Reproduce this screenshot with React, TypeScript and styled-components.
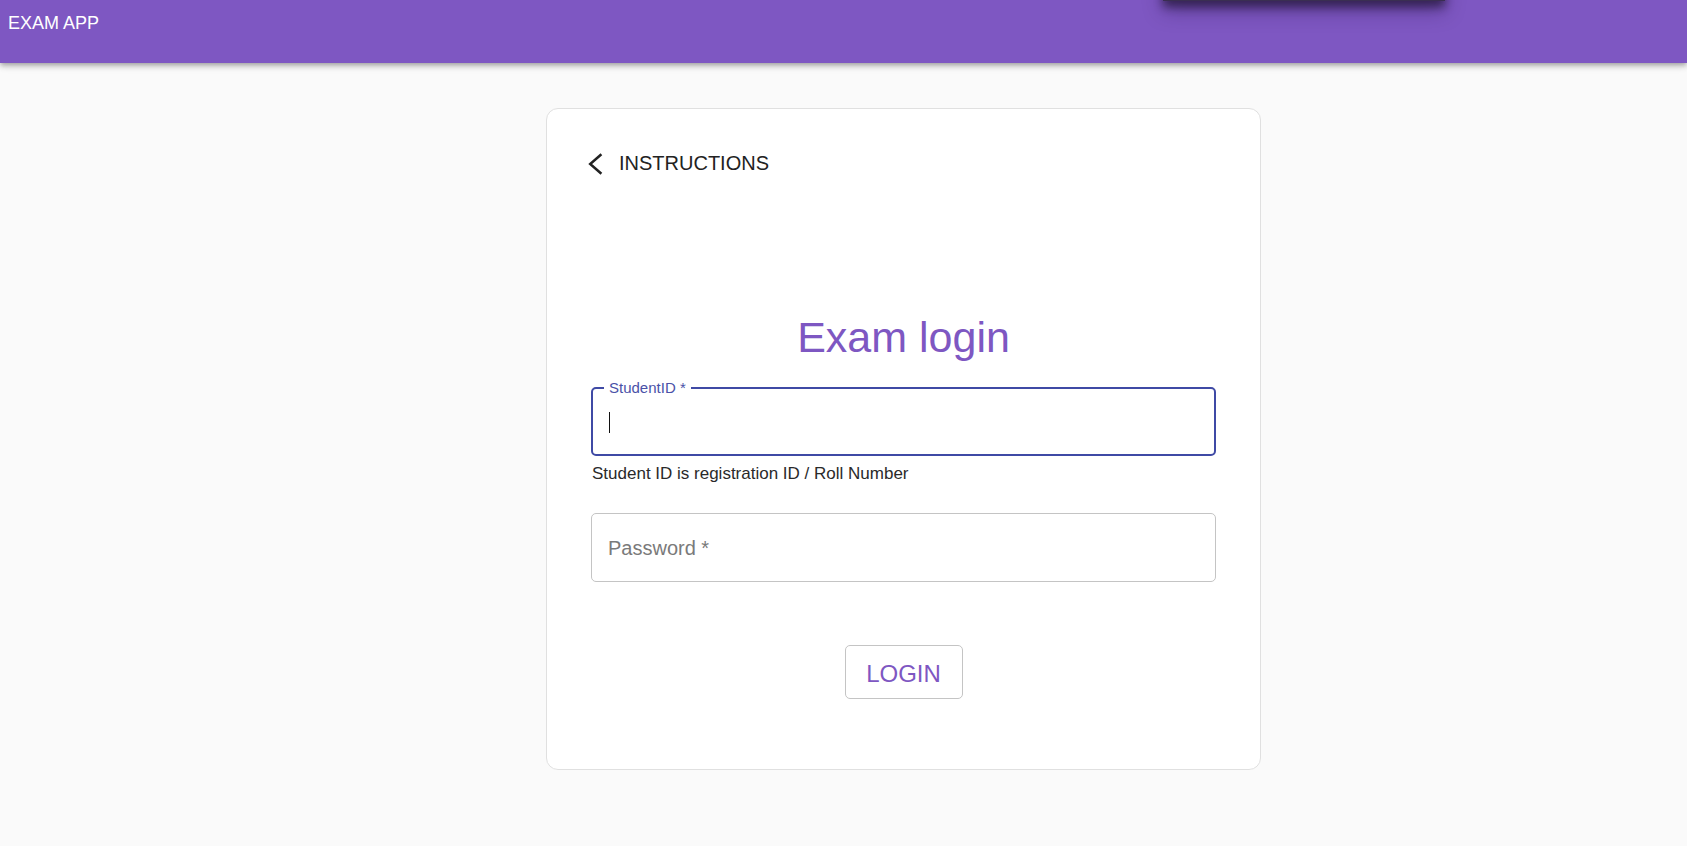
import React from 'react';
import styled, { createGlobalStyle } from 'styled-components';

const GlobalStyle = createGlobalStyle`
  * {
    box-sizing: border-box;
  }

  body {
    margin: 0;
    background-color: #fafafa;
    font-family: 'Liberation Sans', Arial, sans-serif;
    color: rgba(0, 0, 0, 0.87);
  }
`;

function BackIcon(): React.ReactElement {
  return (
    <svg width="15" height="22" viewBox="0 0 15 22" fill="none">
      <polyline points="13.4,1.2 2.2,11 13.4,20.8" stroke="#222" strokeWidth="2.5" strokeLinejoin="miter" />
    </svg>
  );
}

export default function App(): React.ReactElement {
  return (
    <>
      <GlobalStyle />
      <Header>
        <Brand>EXAM APP</Brand>
        <MenuEdge />
      </Header>
      <Main>
        <Card>
          <BackButton type="button">
            <BackIcon />
            <span>INSTRUCTIONS</span>
          </BackButton>
          <Title>Exam login</Title>
          <Field focused>
            <FloatingLabel>StudentID *</FloatingLabel>
            <Caret />
          </Field>
          <HelperText>Student ID is registration ID / Roll Number</HelperText>
          <Field>
            <Placeholder>Password *</Placeholder>
          </Field>
          <Actions>
            <LoginButton type="button">LOGIN</LoginButton>
          </Actions>
        </Card>
      </Main>
    </>
  );
}

const Header = styled.header`
  position: relative;
  height: 63px;
  padding: 12px 8px;
  background-color: #7e57c2;
  box-shadow: 0 2px 4px -1px rgba(0, 0, 0, 0.2), 0 4px 5px 0 rgba(0, 0, 0, 0.14), 0 1px 10px 0 rgba(0, 0, 0, 0.12);
`;

const Brand = styled.h1`
  margin: 0;
  font-size: 18px;
  line-height: 22px;
  font-weight: 400;
  color: #ffffff;
`;

const MenuEdge = styled.div`
  position: absolute;
  top: -30px;
  left: 1163px;
  width: 282px;
  height: 31px;
  background-color: #3a2e52;
  box-shadow: 0 6px 10px rgba(0, 0, 0, 0.45), 0 10px 20px rgba(30, 10, 60, 0.35);
`;

const Main = styled.main`
  display: flex;
  justify-content: center;
  padding: 45px 0 0 120px;
`;

const Card = styled.section`
  width: 715px;
  padding: 39px 44px 70px;
  display: flex;
  flex-direction: column;
  background-color: #ffffff;
  border: 1px solid #e0e0e0;
  border-radius: 12px;
`;

const BackButton = styled.button`
  align-self: flex-start;
  height: 30px;
  margin-left: -3px;
  padding: 0;
  display: flex;
  align-items: center;
  column-gap: 16px;
  border: none;
  background: none;
  font-family: inherit;
  font-size: 20px;
  color: #222;
  cursor: pointer;

  svg {
    margin-top: 2px;
  }
`;

const Title = styled.h2`
  margin: 135px 0 0;
  text-align: center;
  font-size: 43px;
  line-height: 48px;
  font-weight: 400;
  color: #7e57c2;
`;

const Field = styled.div<{ focused?: boolean }>`
  position: relative;
  height: 69px;
  margin-top: ${({ focused }) => (focused ? '26px' : '29px')};
  padding: 0 16px;
  display: flex;
  align-items: center;
  border: ${({ focused }) => (focused ? '2px solid #3f4aa5' : '1px solid #c4c4c4')};
  border-radius: 5px;
`;

const FloatingLabel = styled.label`
  position: absolute;
  top: -10px;
  left: 11px;
  padding: 0 5px;
  background-color: #ffffff;
  font-size: 15px;
  line-height: 18px;
  color: #4a52a8;
`;

const Caret = styled.span`
  width: 1px;
  height: 21px;
  margin-top: 2px;
  background-color: #111;
`;

const Placeholder = styled.span`
  font-size: 20px;
  color: #7a7a7a;
  margin-top: 2px;
`;

const HelperText = styled.p`
  margin: 8px 0 0 1px;
  font-size: 17px;
  line-height: 20px;
  color: #2a2a2a;
`;

const Actions = styled.div`
  margin-top: 63px;
  display: flex;
  justify-content: center;
`;

const LoginButton = styled.button`
  width: 118px;
  height: 54px;
  padding: 3px 0 0;
  border: 1px solid #c4c4c4;
  border-radius: 5px;
  background-color: #ffffff;
  font-family: inherit;
  font-size: 24px;
  color: #7e57c2;
  cursor: pointer;
`;
